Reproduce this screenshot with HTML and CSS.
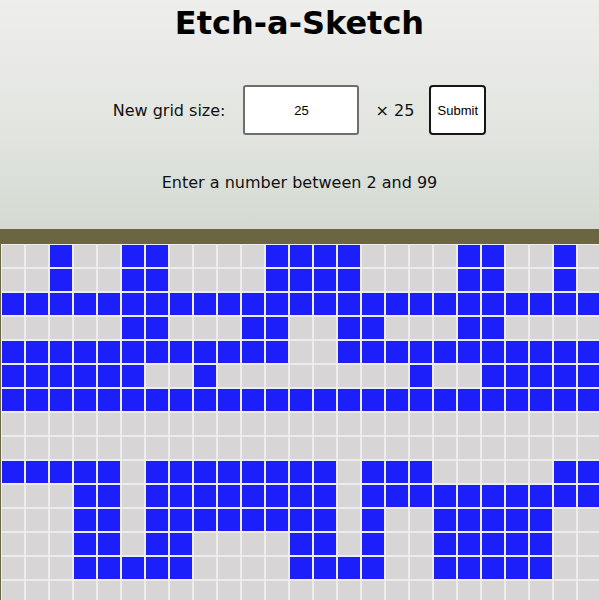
FILE: index.html
```html
<!DOCTYPE html>
<html lang="en">
<head>
<meta charset="utf-8">
<title>Etch-a-Sketch</title>
<link rel="stylesheet" href="styles.css">
</head>
<body>
<header class="top">
  <h1 class="title">Etch-a-Sketch</h1>
  <form class="size-form" onsubmit="return false">
    <label class="size-label" for="size">New grid size:</label>
    <input class="size-input" id="size" type="text" value="25">
    <span class="size-times">× 25</span>
    <button class="submit-btn" type="submit">Submit</button>
  </form>
  <p class="hint">Enter a number between 2 and 99</p>
</header>
<main class="board">
  <div class="grid" id="grid"></div>
</main>
<script src="script.js"></script>
</body>
</html>
```

FILE: styles.css
```css
html, body {
  margin: 0;
  padding: 0;
  overflow: hidden;
}
body {
  font-family: "DejaVu Sans", Verdana, sans-serif;
  color: #111;
  background: #d5dbd3;
}
.top {
  background: linear-gradient(to bottom, #eeeeec 0%, #e4e6e2 50%, #d4dad2 100%);
  padding: 5px 0 0;
  height: 229px;
  box-sizing: border-box;
  text-align: center;
}
.title {
  margin: 0;
  font-size: 32px;
  font-weight: bold;
  line-height: 37px;
  color: #000;
}
.size-form {
  margin-top: 43px;
  display: flex;
  justify-content: center;
  align-items: center;
  gap: 16px;
}
.size-label, .size-times {
  font-size: 16px;
  color: #111;
}
.size-label {
  margin-right: 2px;
}
.size-input {
  width: 116px;
  height: 50px;
  box-sizing: border-box;
  border: 2px solid #6e6e6e;
  border-radius: 3px;
  background: #fff;
  text-align: center;
  font-family: "Liberation Sans", Arial, sans-serif;
  font-size: 13px;
  color: #000;
  padding: 0;
}
.submit-btn {
  width: 57px;
  height: 50px;
  box-sizing: border-box;
  border: 2px solid #161616;
  border-radius: 4px;
  background: #fff;
  font-family: "Liberation Sans", Arial, sans-serif;
  font-size: 13px;
  color: #000;
  padding: 0;
  margin-left: -1px;
}
.hint {
  margin: 38px 0 0;
  font-size: 16px;
  line-height: 19px;
  color: #111;
}
.board {
  border-top: 15px solid #6b6641;
  border-left: 1px solid #6b6641;
  background: #eeeeee;
}
.grid {
  display: grid;
  grid-template-columns: repeat(25, 24px);
  grid-auto-rows: 24px;
  width: 600px;
}
.cell {
  box-sizing: border-box;
  border: 1px solid #eeeded;
  background: #d7d5d6;
}
.cell.on {
  background: #1c1ffa;
}
```

FILE: script.js
```js
var pattern = [
  "..#..##....####....##..#.",
  "..#..##....####....##..#.",
  "#########################",
  ".....##...##..##...##....",
  "############..###########",
  "######..#........#..#####",
  "#########################",
  ".........................",
  ".........................",
  "#####.########.###.....##",
  "...##.########.##########",
  "...##.########.#..#####..",
  "...##.##....##.#..#####..",
  "...#####....####..#####..",
  "........................."
];
var grid = document.getElementById("grid");
for (var r = 0; r < 25; r++) {
  var row = pattern[r] || ".........................";
  for (var c = 0; c < 25; c++) {
    var d = document.createElement("div");
    d.className = row.charAt(c) === "#" ? "cell on" : "cell";
    grid.appendChild(d);
  }
}
```
